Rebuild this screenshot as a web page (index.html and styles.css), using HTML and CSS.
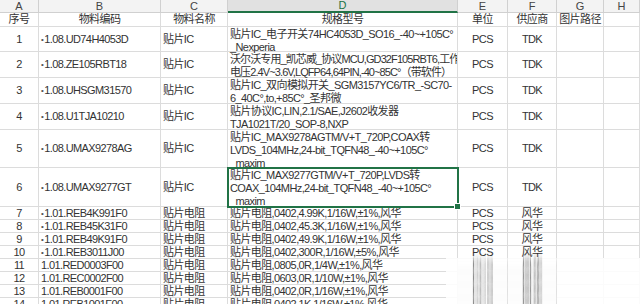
FILE: index.html
```html
<!DOCTYPE html>
<html lang="zh-CN">
<head>
    <meta charset="UTF-8">
    <title>物料清单</title>
    <link rel="stylesheet" href="styles.css">
</head>
<body>
    <svg class="defs"><filter id="vb" x="-20%" y="-200%" width="140%" height="500%"><feGaussianBlur stdDeviation="0.3 5"/></filter></svg>
    <div class="sheet">
        <div class="col">A</div><div class="col">B</div><div class="col">C</div><div class="col on">D</div><div class="col">E</div><div class="col">F</div><div class="col">G</div><div class="col">H</div>

        <div class="c">序号</div><div class="c">物料编码</div><div class="c">物料名称</div><div class="c">规格型号</div><div class="c">单位</div><div class="c">供应商</div><div class="c">图片路径</div><div></div>

        <div class="c">1</div><div><span class="mk">•</span>1.08.UD74H4053D</div><div>贴片IC</div><div class="spec">贴片IC_电子开关74HC4053D_SO16_-40~+105C°<br>_Nexperia</div><div class="c">PCS</div><div class="c">TDK</div><div></div><div></div>

        <div class="c">2</div><div><span class="mk">•</span>1.08.ZE105RBT18</div><div>贴片IC</div><div class="spec tight">沃尔沃专用_凯芯威_协议MCU,GD32F105RBT6,工作<br>电压2.4V~3.6V,LQFP64,64PIN,-40~85C°（带软件）</div><div class="c">PCS</div><div class="c">TDK</div><div></div><div></div>

        <div class="c">3</div><div><span class="mk">•</span>1.08.UHSGM31570</div><div>贴片IC</div><div class="spec">贴片IC_双向模拟开关_SGM3157YC6/TR_-SC70-<br>6_40C°,to,+85C°_圣邦微</div><div class="c">PCS</div><div class="c">TDK</div><div></div><div></div>

        <div class="c">4</div><div><span class="mk">•</span>1.08.U1TJA10210</div><div>贴片IC</div><div class="spec">贴片协议IC,LIN,2.1/SAE,J2602收发器<br>TJA1021T/20_SOP-8,NXP</div><div class="c">PCS</div><div class="c">TDK</div><div></div><div></div>

        <div class="c">5</div><div><span class="mk">•</span>1.08.UMAX9278AG</div><div>贴片IC</div><div class="spec">贴片IC_MAX9278AGTM/V+T_720P,COAX转<br>LVDS_104MHz,24-bit_TQFN48_-40~+105C°<br>_maxim</div><div class="c">PCS</div><div class="c">TDK</div><div></div><div></div>

        <div class="c">6</div><div><span class="mk">•</span>1.08.UMAX9277GT</div><div>贴片IC</div><div class="spec sel">贴片IC_MAX9277GTM/V+T_720P,LVDS转<br>COAX_104MHz,24-bit_TQFN48_-40~+105C°<br>_maxim</div><div class="c">PCS</div><div class="c">TDK</div><div></div><div></div>

        <div class="c">7</div><div><span class="mk">•</span>1.01.REB4K991F0</div><div>贴片电阻</div><div>贴片电阻,0402,4.99K,1/16W,±1%,风华</div><div class="c">PCS</div><div class="c">风华</div><div></div><div></div>
        <div class="c">8</div><div><span class="mk">•</span>1.01.REB45K31F0</div><div>贴片电阻</div><div>贴片电阻,0402,45.3K,1/16W,±1%,风华</div><div class="c">PCS</div><div class="c">风华</div><div></div><div></div>
        <div class="c">9</div><div><span class="mk">•</span>1.01.REB49K91F0</div><div>贴片电阻</div><div>贴片电阻,0402,49.9K,1/16W,±1%,风华</div><div class="c">PCS</div><div class="c">风华</div><div></div><div></div>
        <div class="c">10</div><div><span class="mk">•</span>1.01.REB3011J00</div><div>贴片电阻</div><div>贴片电阻,0402,300R,1/16W,±5%,风华</div><div class="c">PCS</div><div class="c">风华</div><div></div><div></div>
        <div class="c">11</div><div>1.01.RED0003F00</div><div>贴片电阻</div><div>贴片电阻,0805,0R,1/4W,±1%,风华</div><div class="c smear">PCS</div><div class="c smear">风华</div><div></div><div></div>
        <div class="c">12</div><div>1.01.REC0002F00</div><div>贴片电阻</div><div>贴片电阻,0603,0R,1/10W,±1%,风华</div><div class="c smear">PCS</div><div class="c smear">风华</div><div></div><div></div>
        <div class="c">13</div><div>1.01.REB0001F00</div><div>贴片电阻</div><div>贴片电阻,0402,0R,1/16W,±1%,风华</div><div class="c smear">PCS</div><div class="c smear">风华</div><div></div><div></div>
        <div class="c">14</div><div>1.01.REB1001F00</div><div>贴片电阻</div><div>贴片电阻,0402,1K,1/16W,±1%,风华</div><div class="c smear">PCS</div><div class="c smear">风华</div><div></div><div></div>
    </div>
    <div class="fade"></div>
</body>
</html>
```

FILE: styles.css
```css
body { margin: 0; font-family: "Liberation Sans", "Noto Sans CJK SC", sans-serif; font-size: 11px; letter-spacing: -0.6px; color: #333; background: #fff; overflow: hidden; }
.defs { position: absolute; width: 0; height: 0; }
.sheet { display: grid; grid-template-columns: 39px 122px 67px 230px 50px 49px 47px 36px; grid-template-rows: 13px 14px 25px 26px 26px 26px 38px 39px; grid-auto-rows: 13px; }
.sheet > div { box-sizing: border-box; border-right: 1px solid #dcdcdc; border-bottom: 1px solid #dcdcdc; display: flex; align-items: center; padding: 0 2px; line-height: 13px; white-space: nowrap; }
.sheet > .col { background: #f3f3f3; color: #444; justify-content: center; border-color: #d0d0d0; letter-spacing: 0; }
.sheet > .col.on { background: #e1e1e1; color: #217346; border-bottom: 2px solid #217346; }
.c { justify-content: center; }
.mk { font-size: 8px; margin-right: 1px; color: #555; }
.sheet > .spec { display: block; overflow-x: clip; overflow-y: visible; padding-top: 1px; }
.sheet > .tight { letter-spacing: -0.9px; }
.sheet > .sel { overflow: visible; outline: 2px solid #217346; outline-offset: -1px; position: relative; z-index: 2; }
.sel::after { content: ""; position: absolute; right: -4px; bottom: -4px; width: 5px; height: 5px; background: #217346; border: 1px solid #fff; }
.fade { position: absolute; left: 446px; top: 258px; width: 194px; height: 46px; background: rgba(255, 255, 255, 0.88); z-index: 1; }
.smear { position: relative; z-index: 2; filter: url(#vb); }
```
